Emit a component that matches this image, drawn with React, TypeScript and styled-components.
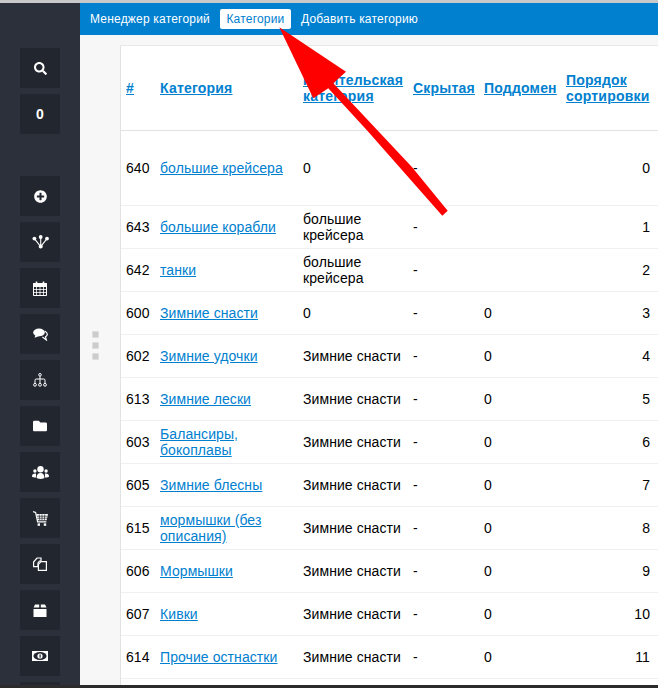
import React from 'react'
import styled, {createGlobalStyle} from 'styled-components'
import {FaSearch, FaPlusCircle, FaFolder} from 'react-icons/fa'

const GlobalStyle = createGlobalStyle`
  html, body {
    margin: 0;
    padding: 0;
    height: 100%;
    overflow: hidden;
    background: #f7f7f7;
  }
  #root {
    height: 100%;
  }
`

type Row = {
  id: number
  name: string
  parent: string
  subdomain?: string
  order: number
  tall?: boolean
}

const rows: Row[] = [
  {id: 640, name: 'большие крейсера', parent: '0', order: 0, tall: true},
  {id: 643, name: 'большие корабли', parent: 'большие крейсера', order: 1},
  {id: 642, name: 'танки', parent: 'большие крейсера', order: 2},
  {id: 600, name: 'Зимние снасти', parent: '0', subdomain: '0', order: 3},
  {id: 602, name: 'Зимние удочки', parent: 'Зимние снасти', subdomain: '0', order: 4},
  {id: 613, name: 'Зимние лески', parent: 'Зимние снасти', subdomain: '0', order: 5},
  {id: 603, name: 'Балансиры, бокоплавы', parent: 'Зимние снасти', subdomain: '0', order: 6},
  {id: 605, name: 'Зимние блесны', parent: 'Зимние снасти', subdomain: '0', order: 7},
  {id: 615, name: 'мормышки (без описания)', parent: 'Зимние снасти', subdomain: '0', order: 8},
  {id: 606, name: 'Мормышки', parent: 'Зимние снасти', subdomain: '0', order: 9},
  {id: 607, name: 'Кивки', parent: 'Зимние снасти', subdomain: '0', order: 10},
  {id: 614, name: 'Прочие остнастки', parent: 'Зимние снасти', subdomain: '0', order: 11},
]

const ShareIcon = () => (
  <svg width="17" height="14" viewBox="0 0 17 14" fill="#fff">
    <circle cx="2.4" cy="3.6" r="1.9" />
    <circle cx="8.7" cy="2" r="1.9" />
    <circle cx="15" cy="3.6" r="1.9" />
    <circle cx="8.7" cy="11.6" r="2" />
    <path d="M2.4 3.6L8.7 11.6L15 3.6M8.7 2V11.6" stroke="#fff" strokeWidth="1.1" fill="none" />
  </svg>
)

const CalendarIcon = () => (
  <svg width="14" height="15" viewBox="0 0 14 15" fill="none" stroke="#fff">
    <path d="M.5 2.5h13v12H.5z" strokeWidth="1" />
    <path d="M.5 2.5h13v3H.5z" fill="#fff" />
    <path d="M3.5 0.5v2.5M10.5 0.5v2.5" strokeWidth="1.6" />
    <path d="M.5 8.5h13M.5 11.5h13M3.5 5.5v9M7 5.5v9M10.5 5.5v9" strokeWidth="0.8" />
  </svg>
)

const BubblesIcon = () => (
  <svg width="15" height="13" viewBox="0 0 15 13" fill="none">
    <ellipse cx="6" cy="4.4" rx="5.8" ry="3.9" fill="#fff" />
    <path d="M2.4 7L1.6 9.8L6.4 8z" fill="#fff" />
    <path d="M11.6 3C13.6 4 14.6 5.4 14.2 6.9C13.9 8 12.9 8.6 12.5 8.8L13.4 12L9.4 9" stroke="#fff" strokeWidth="1.2" />
  </svg>
)

const TreeIcon = () => (
  <svg width="14" height="14" viewBox="0 0 14 14" fill="none" stroke="#fff" strokeWidth="1">
    <circle cx="7" cy="1.8" r="1.3" />
    <path d="M7 3v7M2 10V7.2a1.2 1.2 0 0 1 1.2-1.2h7.6a1.2 1.2 0 0 1 1.2 1.2V10" />
    <circle cx="2" cy="11.8" r="1.4" />
    <circle cx="7" cy="11.8" r="1.4" />
    <circle cx="12" cy="11.8" r="1.4" />
  </svg>
)

const PeopleIcon = () => (
  <svg width="17" height="13" viewBox="0 0 17 13" fill="#fff">
    <circle cx="2.9" cy="5" r="1.7" />
    <circle cx="14.1" cy="5" r="1.7" />
    <path d="M0 10.4C0 8.4 1.4 7.4 4 7.6V11.4C2 11.4 0 11.2 0 10.4zM17 10.4C17 8.4 15.6 7.4 13 7.6V11.4C15 11.4 17 11.2 17 10.4z" />
    <circle cx="8.5" cy="3.2" r="3.2" />
    <path d="M4.6 11.6C4.6 8.6 6 7 8.5 7S12.4 8.6 12.4 11.6C12.4 12.6 10.6 13 8.5 13S4.6 12.6 4.6 11.6z" />
  </svg>
)

const CartIcon = () => (
  <svg width="15" height="15" viewBox="0 0 15 15" fill="none">
    <path d="M0 .7L2.6 1.4L4.6 10.8H13.4" stroke="#fff" strokeWidth="1.2" />
    <path d="M3.2 3H15L13.6 9.2H4.4z" fill="#fff" />
    <path d="M6.2 3.4L6.8 9M9 3.4V9M11.8 3.4L11.3 9M3.8 5.2H14.4M4.2 7.2H14" stroke="#22262f" strokeWidth="0.7" />
    <rect x="4.6" y="12.4" width="2.4" height="2.4" fill="#fff" />
    <rect x="10.8" y="12.4" width="2.4" height="2.4" fill="#fff" />
  </svg>
)

const PagesIcon = () => (
  <svg width="14" height="14" viewBox="0 0 14 14" fill="none" stroke="#fff" strokeWidth="1.2">
    <path d="M.6 5L4 1h4v3H6.5L5 6v3.6H.6z" />
    <path d="M8 4.6h5.4v8.8H5.4V7.4z" />
  </svg>
)

const BoxIcon = () => (
  <svg width="14" height="13" viewBox="0 0 14 13" fill="#fff">
    <path d="M.5 4L2 .5h4.2V3.6H.5zM7.8.5H12L13.5 3.6H7.8zM.5 5h13v8H.5z" />
  </svg>
)

const MoneyIcon = () => (
  <svg width="16" height="10" viewBox="0 0 16 10">
    <rect width="16" height="10" fill="#fff" />
    <ellipse cx="8" cy="5" rx="6.6" ry="4" fill="#22262f" />
    <circle cx="8" cy="5" r="2.6" fill="#fff" />
    <rect x="7.5" y="3.4" width="1.2" height="3.2" fill="#22262f" />
  </svg>
)

const Arrow = () => (
  <ArrowLayer viewBox="0 0 658 688" width="658" height="688">
    <polygon
      fill="#ff0000"
      points="279.3,27.3 346,71.7 333.3,83.3 411.7,166.7 447.7,210.7 442.3,215.7 366.7,130 328.3,88.3 313.3,98.3"
    />
  </ArrowLayer>
)

const App: React.FC = () => {
  return (
    <Page>
      <GlobalStyle />
      <TopStrip />
      <Layout>
        <Sidebar>
          <SideGroup>
            <SideButton><FaSearch size={13} /></SideButton>
            <SideButton><Counter>0</Counter></SideButton>
          </SideGroup>
          <SideGroup>
            <SideButton><FaPlusCircle size={13} /></SideButton>
            <SideButton><ShareIcon /></SideButton>
            <SideButton><CalendarIcon /></SideButton>
            <SideButton><BubblesIcon /></SideButton>
            <SideButton><TreeIcon /></SideButton>
            <SideButton><FaFolder size={14} /></SideButton>
            <SideButton><PeopleIcon /></SideButton>
            <SideButton><CartIcon /></SideButton>
            <SideButton><PagesIcon /></SideButton>
            <SideButton><BoxIcon /></SideButton>
            <SideButton><MoneyIcon /></SideButton>
            <SideButton />
          </SideGroup>
        </Sidebar>
        <Main>
          <Nav>
            <NavItem>Менеджер категорий</NavItem>
            <NavItem $active>Категории</NavItem>
            <NavItem>Добавить категорию</NavItem>
          </Nav>
          <Content>
            <Gutter>
              <Grip />
              <Grip />
              <Grip />
            </Gutter>
            <TablePanel>
              <Table>
                <colgroup>
                  <col width="34" />
                  <col width="143" />
                  <col width="110" />
                  <col width="71" />
                  <col width="82" />
                  <col width="97" />
                </colgroup>
                <thead>
                  <tr>
                    <Head><a>#</a></Head>
                    <Head><a>Категория</a></Head>
                    <Head><a>Родительская категория</a></Head>
                    <Head><a>Скрытая</a></Head>
                    <Head><a>Поддомен</a></Head>
                    <Head><a>Порядок сортировки</a></Head>
                  </tr>
                </thead>
                <tbody>
                  {rows.map((row) => (
                    <BodyRow key={row.id} $tall={row.tall}>
                      <Cell>{row.id}</Cell>
                      <Cell><CategoryLink>{row.name}</CategoryLink></Cell>
                      <Cell>{row.parent}</Cell>
                      <Cell>-</Cell>
                      <Cell>{row.subdomain}</Cell>
                      <OrderCell>{row.order}</OrderCell>
                    </BodyRow>
                  ))}
                </tbody>
              </Table>
            </TablePanel>
          </Content>
        </Main>
      </Layout>
      <BottomStrip />
      <Arrow />
    </Page>
  )
}
export default App

const Page = styled.div`
  position: relative;
  display: flex;
  flex-direction: column;
  width: 658px;
  height: 688px;
  overflow: hidden;
  font-family: 'Liberation Sans', Arial, sans-serif;
  font-size: 14px;
  line-height: 16px;
  color: #000;
`

const TopStrip = styled.div`
  flex: 0 0 3px;
  background: #c9c9c9;
`

const BottomStrip = styled.div`
  flex: 0 0 3px;
  background: #2b2b2b;
`

const Layout = styled.div`
  display: flex;
  flex: 1;
  min-height: 0;
`

const Sidebar = styled.div`
  display: flex;
  flex-direction: column;
  gap: 42px;
  flex: 0 0 80px;
  padding-top: 45px;
  overflow: hidden;
  background: #2b303b;
`

const SideGroup = styled.div`
  display: flex;
  flex-direction: column;
  gap: 6px;
  align-items: center;
`

const SideButton = styled.div`
  display: flex;
  flex: 0 0 40px;
  align-items: center;
  justify-content: center;
  width: 40px;
  height: 40px;
  color: #fff;
  background: #22262f;
`

const Counter = styled.span`
  font-size: 14px;
  font-weight: bold;
`

const Main = styled.div`
  display: flex;
  flex-direction: column;
  flex: 1;
  min-width: 0;
`

const Nav = styled.div`
  display: flex;
  flex: 0 0 32px;
  align-items: center;
  padding-left: 4px;
  background: #0080cf;
`

const NavItem = styled.div<{$active?: boolean}>`
  height: 20px;
  min-width: ${(p) => (p.$active ? '59px' : '0')};
  padding: 0 6px;
  margin-right: 4px;
  border-radius: 2px;
  font-size: 12px;
  line-height: 20px;
  letter-spacing: 0.2px;
  text-align: center;
  color: ${(p) => (p.$active ? '#0080cf' : '#fff')};
  background: ${(p) => (p.$active ? '#fff' : 'transparent')};
`

const Content = styled.div`
  display: flex;
  flex: 1;
  min-height: 0;
  background: #f7f7f7;
`

const Gutter = styled.div`
  display: flex;
  flex-direction: column;
  gap: 4px;
  flex: 0 0 40px;
  padding: 296px 0 0 12px;
  box-sizing: border-box;
`

const Grip = styled.div`
  box-sizing: border-box;
  width: 7px;
  height: 7px;
  background: #cccccc;
  border: 1px solid #dedede;
  border-radius: 1px;
`

const TablePanel = styled.div`
  flex: 1;
  margin-top: 10px;
  overflow: hidden;
  background: #fff;
  border-top: 1px solid #e8e8e8;
  border-left: 1px solid #e2e2e2;
`

const Table = styled.table`
  width: 537px;
  table-layout: fixed;
  border-collapse: collapse;
`

const Head = styled.th`
  height: 84px;
  padding: 0 5px;
  text-align: left;
  font-weight: bold;
  letter-spacing: 0.2px;
  color: #0080cf;
  border-bottom: 1px solid #e2e2e2;
  a {
    text-decoration: underline;
  }
`

const BodyRow = styled.tr<{$tall?: boolean}>`
  height: ${(p) => (p.$tall ? '75px' : '43px')};
  border-bottom: 1px solid #f0f0f0;
`

const Cell = styled.td`
  padding: 0 5px;
  letter-spacing: 0.08px;
`

const OrderCell = styled(Cell)`
  padding-right: 8px;
  text-align: right;
`

const CategoryLink = styled.a`
  color: #0080cf;
  text-decoration: underline;
`

const ArrowLayer = styled.svg`
  position: absolute;
  left: 0;
  top: 0;
  pointer-events: none;
`
